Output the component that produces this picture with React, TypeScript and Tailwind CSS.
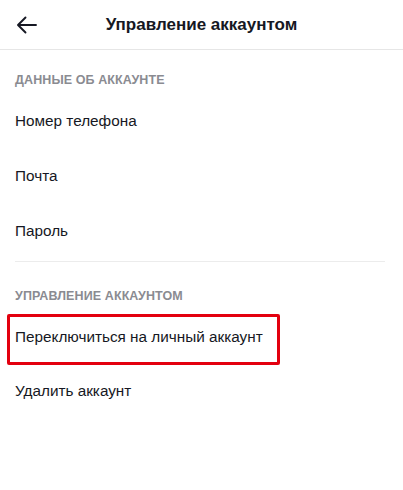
import React from "react";

function Row({ children, h = "h-[55px]" }: { children: React.ReactNode; h?: string }) {
  return (
    <div className={`${h} flex items-center pl-[15px] text-[15.3px] text-[#161823]`}>
      {children}
    </div>
  );
}

export default function App() {
  return (
    <div
      className="w-[403px] h-[490px] bg-white overflow-hidden"
      style={{ fontFamily: '"Liberation Sans", Arial, sans-serif' }}
    >
      <div className="h-[50px] grid grid-cols-[60px_1fr_60px] items-center border-b border-[#e6e6e6]">
        <div className="flex items-center pl-[16px]">
          <svg width="22" height="22" viewBox="0 0 22 22" fill="none">
            <path
              d="M20 11H2.5M9.5 3.5L2 11L9.5 18.5"
              stroke="#161823"
              strokeWidth="1.9"
              strokeLinecap="round"
              strokeLinejoin="round"
            />
          </svg>
        </div>
        <div className="text-center text-[17px] font-bold text-[#161823]">
          Управление аккаунтом
        </div>
        <div />
      </div>

      <div className="pt-[22px] pb-[6px] pl-[15px] text-[12.5px] leading-4 font-semibold text-[#8a8b91] tracking-[0.1px]">
        ДАННЫЕ ОБ АККАУНТЕ
      </div>
      <Row>Номер телефона</Row>
      <Row>Почта</Row>
      <Row>Пароль</Row>
      <div className="mt-[2px] ml-[15px] mr-[18px] h-px bg-[#ececec]" />

      <div className="pt-[26px] pb-[6px] pl-[15px] text-[12.5px] leading-4 font-semibold text-[#8a8b91] tracking-[0.1px]">
        УПРАВЛЕНИЕ АККАУНТОМ
      </div>
      <div className="relative">
        <Row>Переключиться на личный аккаунт</Row>
        <div className="absolute left-[7px] top-[4px] w-[273px] h-[51px] border-[3px] border-[#e3000f] rounded-[2px]" />
      </div>
      <Row h="h-[53px]">Удалить аккаунт</Row>
    </div>
  );
}
